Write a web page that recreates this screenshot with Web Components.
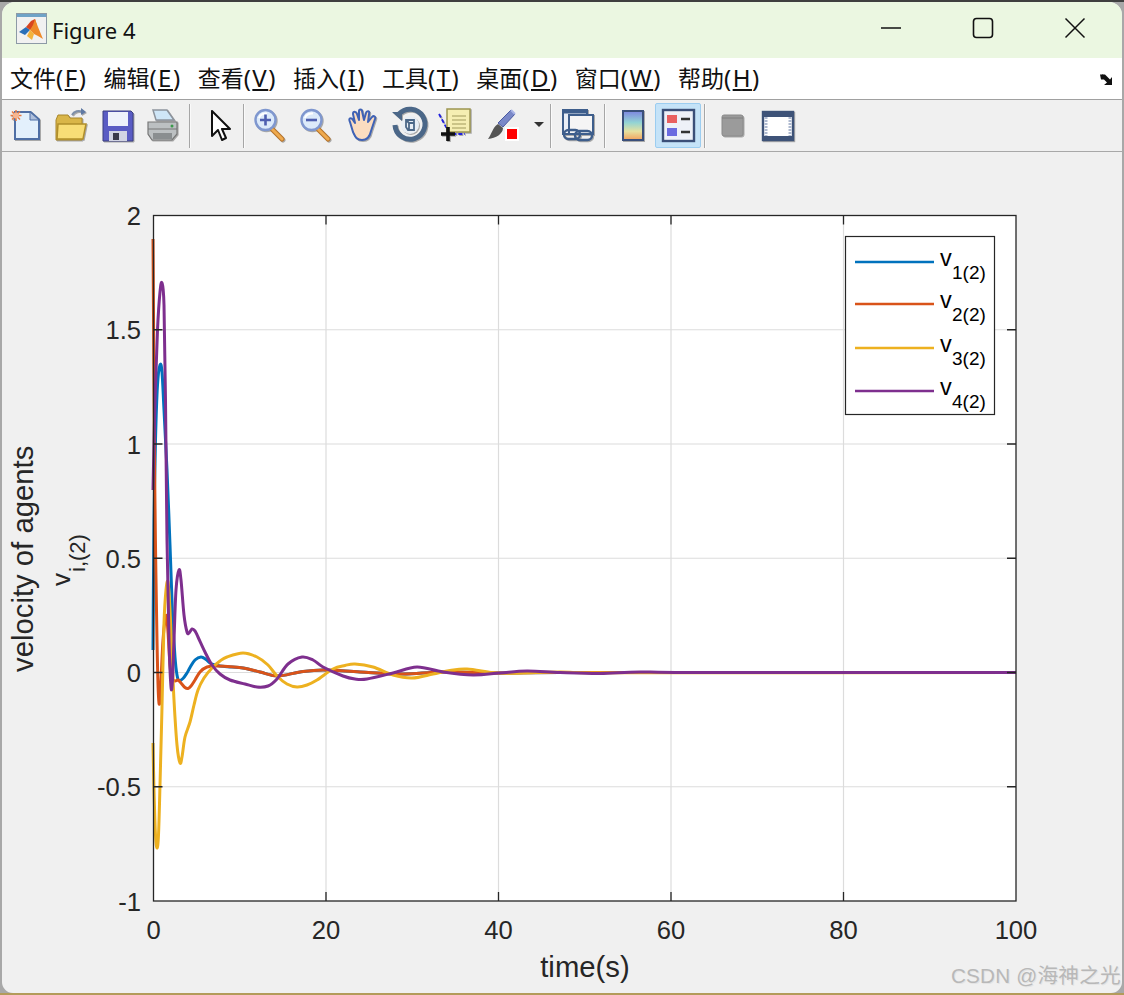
<!DOCTYPE html>
<html lang="zh">
<head>
<meta charset="utf-8">
<title>Figure 4</title>
<style>
html,body{margin:0;height:100%}
body{width:1124px;height:995px;overflow:hidden;background:linear-gradient(#3f3f3f 0 2px,#a8a8a8 2px 993px,#b39b5a 993px)}
</style>
</head>
<body>
<fig-window>
  <title-bar>Figure 4</title-bar>
  <menu-bar>
    <menu-item>文件<span>(<u>F</u>)</span></menu-item>
    <menu-item>编辑<span>(<u>E</u>)</span></menu-item>
    <menu-item>查看<span>(<u>V</u>)</span></menu-item>
    <menu-item>插入<span>(<u>I</u>)</span></menu-item>
    <menu-item>工具<span>(<u>T</u>)</span></menu-item>
    <menu-item>桌面<span>(<u>D</u>)</span></menu-item>
    <menu-item>窗口<span>(<u>W</u>)</span></menu-item>
    <menu-item>帮助<span>(<u>H</u>)</span></menu-item>
  </menu-bar>
  <tool-bar>
    <tool-btn icon="new"></tool-btn><tool-btn icon="open"></tool-btn><tool-btn icon="save"></tool-btn><tool-btn icon="print"></tool-btn>
    <tool-sep style="margin:0 7px 0 3px"></tool-sep>
    <tool-btn icon="arrow"></tool-btn>
    <tool-sep style="margin:0 3px 0 0"></tool-sep>
    <tool-btn icon="zoomin"></tool-btn><tool-btn icon="zoomout"></tool-btn><tool-btn icon="hand"></tool-btn><tool-btn icon="rotate"></tool-btn><tool-btn icon="cursor"></tool-btn><tool-btn icon="brush"></tool-btn>
    <tool-btn icon="drop" style="width:27px"></tool-btn>
    <tool-sep style="margin:0 3px 0 0"></tool-sep>
    <tool-btn icon="link"></tool-btn>
    <tool-sep style="margin:0 4px 0 4px"></tool-sep>
    <tool-btn icon="colorbar"></tool-btn><tool-btn icon="legend" active></tool-btn>
    <tool-sep style="margin:0 5px 0 3px"></tool-sep>
    <tool-btn icon="gray"></tool-btn><tool-btn icon="frame"></tool-btn>
  </tool-bar>
  <fig-plot></fig-plot>
  <water-mark>CSDN @海神之光</water-mark>
</fig-window>
<script>
const def=(n,html,extra={})=>{
  const tpl=document.createElement('template');tpl.innerHTML=html;
  customElements.define(n,class extends HTMLElement{
    constructor(){super();this.attachShadow({mode:'open'}).appendChild(tpl.content.cloneNode(true));}
    connectedCallback(){extra.init&&extra.init.call(this);}
  });
};
def('fig-window',`<style>:host{display:flex;flex-direction:column;position:relative;box-sizing:border-box;margin:2px 2px 0;height:991px;background:#f0f0f0;border-radius:13px 13px 11px 11px;overflow:hidden}</style><slot></slot>`);

def('title-bar',`<style>
:host{display:flex;align-items:center;flex:none;height:56px;background:#ebf7e1;color:#111;font:22px "Noto Sans","Open Sans",sans-serif}
.logo{margin:0 5px 2px 14px;flex:none}
.t{flex:1;white-space:nowrap;padding-bottom:1px}
.c{flex:none;width:92px;height:52px;padding-bottom:4px;display:flex;align-items:center;justify-content:center}
.c:last-child{margin-right:1px}
</style>
<svg class="logo" width="31" height="32" viewBox="0 0 31 32">
<rect x=".5" y=".5" width="30" height="30" fill="#f1f1f1" stroke="#8d9aa6"/>
<rect x="1" y="1" width="29" height="3" fill="#6fa3c7"/>
<polygon points="3,19 10,14 14,17 9,22" fill="#2a6fb8"/>
<polygon points="10,14 15,8 19,6 21,13 14,17" fill="#d8451f"/>
<polygon points="19,6 22,14 27,26 22,23 18,21 14,17 17,12" fill="#ee8a2a"/>
<polygon points="14,17 18,21 16,27 11,23" fill="#f3b33d"/>
</svg>
<span class="t"><slot></slot></span>
<span class="c"><svg width="22" height="22" viewBox="0 0 22 22"><path d="M1 11H21" stroke="#111" stroke-width="1.6"/></svg></span>
<span class="c"><svg width="22" height="22" viewBox="0 0 22 22"><rect x="1.5" y="1.5" width="19" height="19" rx="3" fill="none" stroke="#111" stroke-width="1.6"/></svg></span>
<span class="c"><svg width="22" height="22" viewBox="0 0 22 22"><path d="M1.5 1.5L20.5 20.5M20.5 1.5L1.5 20.5" stroke="#111" stroke-width="1.5"/></svg></span>`);

def('menu-bar',`<style>
:host{display:flex;align-items:center;flex:none;height:41px;box-sizing:content-box;background:#fff;border-bottom:1px solid #a0a0a0;padding-left:8px;gap:16px;position:relative}
.spring{flex:1}
svg{margin-right:7px;margin-top:2px}
</style><slot></slot><span class="spring"></span>
<svg width="16" height="13" viewBox="0 0 16 13"><path d="M1 1.5H6L8 3.5L11 6.5L13 4V12H5L8 9.5L5 6.5H2Z" fill="#111"/><path d="M3 2L12 11" stroke="#111" stroke-width="2"/></svg>`);

def('menu-item',`<style>
:host{display:block;font:23px/1.2 "Noto Sans CJK SC","Noto Sans",sans-serif;color:#111;white-space:nowrap}
::slotted(span){font-family:"Noto Sans","Noto Sans CJK SC",sans-serif;font-size:24px;letter-spacing:1.5px}
</style><slot></slot>`);

def('tool-bar',`<style>
:host{display:flex;align-items:center;flex:none;height:51px;background:#f0f0f0;border-bottom:1px solid #a8a8a8;box-sizing:content-box}
</style><slot></slot>`);

def('tool-sep',`<style>:host{display:block;flex:none;width:1px;height:44px;background:#a6a6a6;box-shadow:1px 0 0 #fafafa}</style>`);

const mag=(sym)=>`<g><path d="M25 26L35 36" stroke="#b8752a" stroke-width="5" stroke-linecap="round"/><path d="M25.5 26.5L35 36" stroke="#efaa4e" stroke-width="3" stroke-linecap="round"/><circle cx="18.5" cy="17" r="10" fill="#dceafa" stroke="#7f97cf" stroke-width="2.4"/><path d="M12 15a7 6 0 0 1 8-4.500" stroke="#fff" stroke-width="2" fill="none"/>${sym}</g>`;
const ICONS={
new:`<path d="M12 8H29L38 16V37H12Z" fill="#4f6fa5"/><path d="M14 10H28L36 17V35H14Z" fill="#e3f0fc"/><path d="M28 9V17H37Z" fill="#aebfdc" stroke="#4f6fa5"/><g stroke="#e9783e" stroke-width="1.500"><path d="M14 7V18M8.500 12.500H19.500M10 8.500L18 16.500M18 8.500L10 16.500"/></g><circle cx="14" cy="12.500" r="3" fill="#f7b58f"/>`,
open:`<path d="M8 17L10 12H20L22 15H34V37H8Z" fill="#d9b548" stroke="#a8862a"/><path d="M10 21H38L35 36H9Z" fill="#f8dd76" stroke="#b08e2b" stroke-width="1.500"/><path d="M24 12C26 8 31 7 34 9" fill="none" stroke="#7e8fa8" stroke-width="2"/><path d="M33 5L38 9L33 12Z" fill="#5f79a4"/>`,
save:`<path d="M9 8H37L39 10V38H9Z" fill="#5a5cc4" stroke="#3a3f80"/><rect x="14" y="9" width="20" height="14" fill="#eef1fb"/><rect x="15" y="28" width="18" height="10" fill="#d2d4e4"/><rect x="19" y="30" width="6" height="7" fill="#3b3b4c"/>`,
print:`<path d="M13 7H27L34 17H16Z" fill="#cfe6f7" stroke="#8d949d" stroke-width="1.500"/><path d="M8 19H37V31L32 37H12L8 31Z" fill="#bcc0c2" stroke="#777" stroke-width="1.200"/><path d="M8 26H37" stroke="#777"/><path d="M13 30H32V36H13Z" fill="#8a8e90"/><circle cx="32" cy="23" r="1.500" fill="#3c9a4b"/>`,
arrow:`<path d="M15 8V33L21 27L25 37L29 35L25 26H33Z" fill="#fff" stroke="#111" stroke-width="2" stroke-linejoin="round"/>`,
zoomin:mag(`<path d="M13 17H24M18.500 11.500V22.500" stroke="#4e5fb0" stroke-width="2.600"/>`),
zoomout:mag(`<path d="M13 17H24" stroke="#4e5fb0" stroke-width="2.600"/>`),
hand:`<g transform="translate(2 0)"><path d="M9 19C7 15 10 14 12 17L14 20L12 11C12 8 15 8 16 11L18 17L18 8C18 6 21 6 21 8L23 17L25 10C26 7 29 8 28 11L27 19L31 14C33 12 35 14 34 16L30 28C29 33 27 37 21 37C15 37 14 33 12 29Z" fill="#fbdcc0" stroke="#3f62b5" stroke-width="2" stroke-linejoin="round"/></g>`,
rotate:`<g transform="translate(2 0)"><path d="M12 11A15 15 0 1 1 8 22" fill="none" stroke="#4b6788" stroke-width="5"/><path d="M5 9H15V18Z" fill="#4b6788"/><circle cx="23" cy="22" r="9" fill="#e8eef5"/><path d="M19 17H27V27H21L19 24ZM19 17L22 20H27M22 20V27" fill="none" stroke="#4b6788" stroke-width="1.800"/></g>`,
cursor:`<g transform="translate(-1 0)"><path d="M9 11L16 24L23 31H35" fill="none" stroke="#2020e0" stroke-width="1.800" stroke-dasharray="4 2"/><rect x="17" y="6" width="23" height="23" fill="#f5eeb2" stroke="#9c9550" stroke-width="1.500"/><path d="M22 13H36M22 17H36M22 21H36M22 25H36" stroke="#bdb77a" stroke-width="1.500"/><path d="M11 31H25M18 24V38" stroke="#111" stroke-width="3.600"/></g>`,
brush:`<g transform="translate(1 0)"><path d="M20 20L33 7L37 11L25 24Z" fill="#7a88c8" stroke="#4a5aa0"/><path d="M33 7L37 11" stroke="#aab5e6" stroke-width="2"/><path d="M20 21L25 25C25 31 18 35 10 36C14 31 14 25 20 21Z" fill="#555"/><rect x="27" y="24" width="14" height="14" fill="#fff"/><rect x="29" y="26" width="10" height="10" fill="#f00"/></g>`,
drop:`<path d="M11 19H21L16 24Z" fill="#333"/>`,
link:`<rect x="9" y="7" width="24" height="24" fill="#e9eef6" stroke="#3e5e8c" stroke-width="2"/><path d="M9 9H33" stroke="#3e5e8c" stroke-width="3"/><rect x="15" y="12" width="24" height="19" fill="#f5f5f5" stroke="#3e5e8c" stroke-width="2"/><g fill="none" stroke="#3e5e8c" stroke-width="2.400"><rect x="10" y="27" width="16" height="9" rx="4.500"/><rect x="21" y="28" width="17" height="9" rx="4.500"/></g>`,
colorbar:`<defs><linearGradient id="cb" x1="0" y1="0" x2="0" y2="1"><stop offset="0" stop-color="#7d84e0"/><stop offset=".4" stop-color="#93d4d4"/><stop offset=".7" stop-color="#e6e1a0"/><stop offset="1" stop-color="#f2a15d"/></linearGradient></defs><rect x="14" y="8" width="20" height="29" fill="url(#cb)" stroke="#3a4f7a" stroke-width="2"/>`,
legend:`<rect x="8" y="7" width="31" height="31" fill="#eef1f8" stroke="#3b4f78" stroke-width="2.400"/><rect x="12" y="12" width="10" height="8" fill="#e96060"/><rect x="12" y="25" width="10" height="8" fill="#6b6be0"/><path d="M26 16H35M26 29H35" stroke="#333" stroke-width="2.400"/>`,
gray:`<rect x="12" y="12" width="21" height="21" rx="2" fill="#9b9b9b" stroke="#8a8a8a"/><path d="M12 15H33" stroke="#7f7f7f"/>`,
frame:`<g transform="translate(-2 0)"><rect x="9" y="9" width="30" height="28" fill="#fff" stroke="#3e5378" stroke-width="2.400"/><path d="M9 12H39M9 35H39" stroke="#3e5378" stroke-width="4"/><path d="M12 14V33M36 14V33" stroke="#aeb9cf" stroke-width="3" stroke-dasharray="2 1"/></g>`
};
def('tool-btn',`<style>
:host{display:block;flex:none;width:46px;height:45px;box-sizing:border-box;border:1px solid transparent;border-radius:2px}
:host([active]){background:#c5e3f8;border-color:#9ccdf0}
svg{display:block;margin:-1px;overflow:visible;filter:drop-shadow(1px 1px .6px rgba(110,110,110,.55)) blur(.25px)}
</style><svg width="46" height="45" viewBox="0 0 46 45"></svg>`,{init(){
  const i=this.getAttribute('icon');
  const s=this.shadowRoot.querySelector('svg');
  s.innerHTML=ICONS[i]||'';
  if(i==='arrow'||i==='drop'||i==='brush'||i==='legend')s.style.filter='blur(.2px)';
}});

const BLUE=[[153,650],[153.4,590],[154,520],[155.5,440],[157.5,385],[160,365],[162,372],[164,410],[167,470],[170,545],[172.5,615],[175,657],[177,675],[179,680.500],[183,678.500],[187,673],[190,667.500],[195,660],[201,657],[206,659.500],[210,663],[215,665],[220,666],[232,667],[243,668],[260,672],[278,676],[300,672],[323,670],[360,672],[403,674],[443,672],[500,673],[560,672.500],[1016,672.500]];
const RED=[[153,239],[153.6,330],[154.600,470],[155.700,560],[157,640],[158.200,690],[159.500,704],[161,680],[163,640],[165,620],[166.500,616],[168,632],[170,665],[172,678],[175,681],[178,680],[181,683],[185,687.500],[188,688.500],[191,686],[195,680],[200,672],[207,667],[217,666],[243,668],[260,672],[278,676],[300,672],[323,670],[360,672],[403,674],[443,672],[500,673],[560,672.500],[1016,672.500]];
const YEL=[[153,743],[154,790],[155.500,835],[157,848],[158.500,835],[160,785],[162,707],[164,623],[166,590],[168,582],[170,610],[172,655],[174,700],[177,745],[180,763],[182,757],[185,737],[190,722],[194,705],[198,690],[204,678],[212,668],[220,661],[227,657],[243,653],[257,657],[268,665],[277,676],[287,684],[297,687],[307,685],[317,680],[333,669],[345,665.500],[355,664],[373,667],[393,675],[412,678],[433,674],[450,670.500],[467,669],[497,673],[523,673],[560,672],[620,672.800],[1016,672.500]];
const PUR=[[153,490],[155,400],[157.500,330],[160,292],[162,283],[164,305],[165.500,400],[167,540],[169,640],[171,687],[172.500,680],[174,640],[176,590],[179,570],[181,580],[184,615],[187,632],[189,633],[192,629],[195,631],[198,637],[205,652],[212,665],[220,674],[230,680],[245,684],[257,687],[268,686],[277,679],[288,664],[302,657],[313,660],[323,667],[343,676],[355,679],[367,679],[393,673],[417,667],[443,672],[473,675],[500,673],[527,671],[560,672.500],[600,673.500],[640,672],[700,672.600],[1016,672.500]];
const pathOf=p=>{
  let d=`M${p[0][0]} ${p[0][1]}`;
  for(let i=0;i<p.length-1;i++){
    const a=p[Math.max(i-1,0)],b=p[i],c=p[i+1],e=p[Math.min(i+2,p.length-1)],k=1/6;
    const lim=(v,lo,hi)=>Math.min(Math.max(lo,hi),Math.max(Math.min(lo,hi),v));
    d+=`C${lim(b[0]+(c[0]-a[0])*k,b[0],c[0]).toFixed(2)} ${(b[1]+(c[1]-a[1])*k).toFixed(2)} ${lim(c[0]-(e[0]-b[0])*k,b[0],c[0]).toFixed(2)} ${(c[1]-(e[1]-b[1])*k).toFixed(2)} ${c[0]} ${c[1]}`;
  }
  return d;
};
const X0=153.5,X1=1016,Y0=215.5,Y1=901;
const xt=[0,20,40,60,80,100],yt=['2','1.5','1','0.5','0','-0.5','-1'];
const xp=i=>X0+(X1-X0)*i/5, yp=i=>Y0+(Y1-Y0)*i/6;
let grid='',ticks='',labels='';
xt.forEach((v,i)=>{const x=xp(i);
  if(i>0&&i<5)grid+=`<path d="M${x} ${Y0}V${Y1}"/>`;
  if(i>0&&i<5)ticks+=`<path d="M${x} ${Y1}v-9M${x} ${Y0}v9"/>`;
  labels+=`<text x="${x}" y="939" text-anchor="middle">${v}</text>`;});
yt.forEach((v,i)=>{const y=yp(i);
  if(i>0&&i<6)grid+=`<path d="M${X0} ${y}H${X1}"/>`;
  if(i>0&&i<6)ticks+=`<path d="M${X0} ${y}h9M${X1} ${y}h-9"/>`;
  labels+=`<text x="141" y="${y+9.5}" text-anchor="end">${v}</text>`;});
const COL=['#0072BD','#D95319','#EDB120','#7E2F8E'];
const LY=[262,304,348,391];
const leg=LY.map((y,i)=>`<path d="M855 ${y}H934" stroke="${COL[i]}" stroke-width="2.500"/><text x="940" y="${y+4}" class="lv">v</text><text x="952" y="${y+17}" class="ls">${i+1}(2)</text>`).join('');
def('fig-plot',`<style>
:host{display:block;flex:1;min-height:0}
svg{display:block}
text{font-family:"Liberation Sans",Arial,sans-serif;fill:#262626}
.tick text{font-size:25.6px}
.lab{font-size:29.3px}
.lv{font-size:23.5px;fill:#000}.ls{font-size:19px;fill:#000}
.grid path{stroke:#dcdcdc;stroke-width:1.200;fill:none}
.axes path{stroke:#262626;stroke-width:1.300;fill:none}
.lines path{fill:none;stroke-width:3;stroke-linejoin:round}
</style>
<svg width="1120" height="841" viewBox="2 152 1120 841">
<rect x="${X0}" y="${Y0}" width="${X1-X0}" height="${Y1-Y0}" fill="#fff"/>
<g class="grid">${grid}</g>
<g class="lines">
<path d="${pathOf(BLUE)}" stroke="${COL[0]}"/>
<path d="${pathOf(RED)}" stroke="${COL[1]}"/>
<path d="${pathOf(YEL)}" stroke="${COL[2]}"/>
<path d="${pathOf(PUR)}" stroke="${COL[3]}"/>
</g>
<g class="axes"><rect x="${X0}" y="${Y0}" width="${X1-X0}" height="${Y1-Y0}" fill="none" stroke="#262626" stroke-width="1.300"/>${ticks}</g>
<rect x="845.500" y="236.500" width="149" height="178" fill="#fff" stroke="#262626" stroke-width="1.200"/>
${leg}
<g class="tick">${labels}</g>
<text class="lab" x="585" y="977" text-anchor="middle">time(s)</text>
<text class="lab" transform="translate(33 672) rotate(-90)">velocity of agents</text>
<text transform="translate(69.500 586) rotate(-90)" font-size="26">v</text>
<text transform="translate(85 572) rotate(-90)" font-size="22">i,(2)</text>
</svg>`);

def('water-mark',`<style>
:host{position:absolute;right:1px;bottom:4px;font:20.700px/1.2 "Liberation Sans","Noto Sans CJK SC",sans-serif;color:#b8b8b8;text-shadow:1px 1px 0 #e4e4e4;white-space:nowrap;letter-spacing:.2px}
</style><slot></slot>`);
</script>
</body>
</html>
